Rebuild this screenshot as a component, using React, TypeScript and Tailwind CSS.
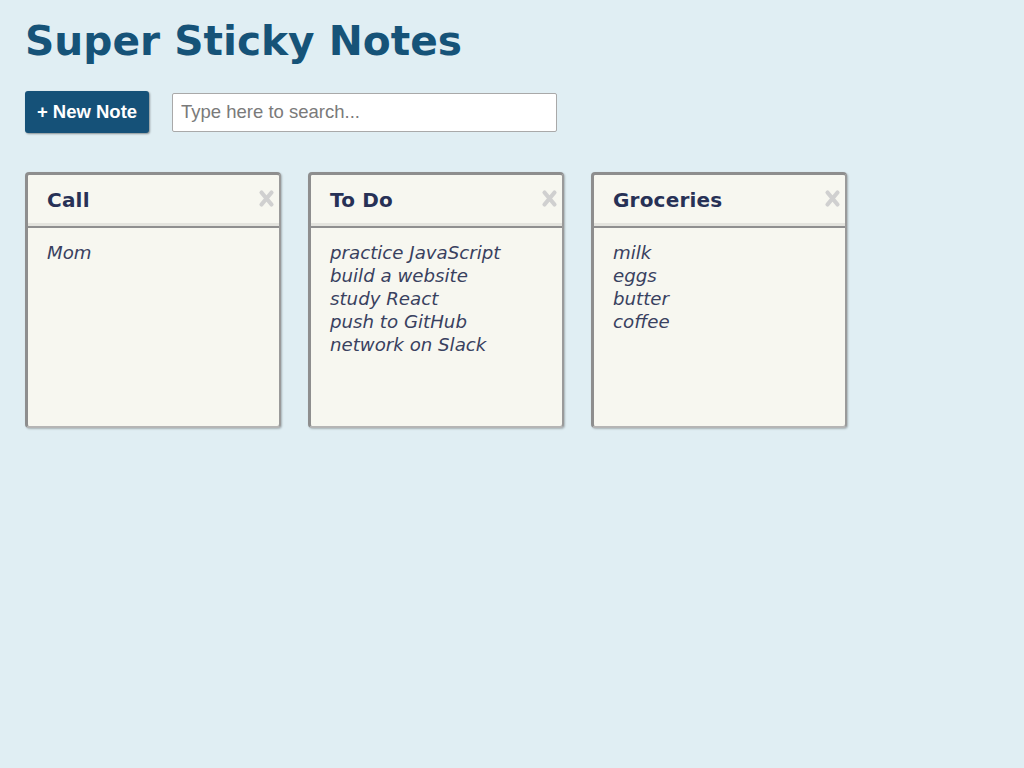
import React from "react";

const notes = [
  { title: "Call", items: ["Mom"] },
  {
    title: "To Do",
    items: [
      "practice JavaScript",
      "build a website",
      "study React",
      "push to GitHub",
      "network on Slack",
    ],
  },
  { title: "Groceries", items: ["milk", "eggs", "butter", "coffee"] },
];

function Note({ title, items }: { title: string; items: string[] }) {
  return (
    <div className="relative w-[256px] h-[256px] rounded-[4px] bg-[#f7f7f0] border-t-[3px] border-l-[3px] border-r-2 border-b-2 border-t-[#8e8e8e] border-l-[#8e8e8e] border-r-[#9a9a9a] border-b-[#b5b5b5] shadow-[1px_1px_2px_rgba(0,0,0,0.25)] flex flex-col">
      <div className="h-[51px] shrink-0 flex items-center pl-[19px] pt-[2px] border-b-[3px] border-b-[#e4e4de]">
        <span className="text-[20px] font-bold text-[#273156] tracking-[0.2px]">
          {title}
        </span>
      </div>
      <div className="h-[2px] bg-[#8f8f8f] shrink-0" />
      <svg
        className="absolute right-[4px] top-[14px]"
        width="17"
        height="19"
        viewBox="0 0 17 19"
      >
        <path
          d="M3.5 3.5 L13.5 15.5 M13.5 3.5 L3.5 15.5"
          stroke="#d0d0d0"
          strokeWidth="4.2"
          strokeLinecap="round"
          fill="none"
        />
      </svg>
      <div className="pl-[19px] pt-[13px] text-[18.2px] leading-[23px] italic text-[#39415f]">
        {items.map((it) => (
          <div key={it}>{it}</div>
        ))}
      </div>
    </div>
  );
}

export default function App() {
  return (
    <div className="min-h-[768px] w-full bg-[#e0eef3] font-['DejaVu_Sans',sans-serif] px-[25px] pt-[17px]">
      <h1 className="text-[40.7px] leading-[48px] font-bold text-[#165378]">
        Super Sticky Notes
      </h1>
      <div className="mt-[26px] flex items-center gap-[23px]">
        <button className="w-[124px] h-[42px] rounded-[3px] bg-[#155178] text-white font-bold text-[18.5px] font-['Liberation_Sans',sans-serif] shadow-[1px_1px_2px_rgba(0,0,0,0.4)]">
          + New Note
        </button>
        <input
          className="w-[385px] h-[39px] bg-white border border-[#a9a9a9] rounded-[2px] px-[8px] text-[18.5px] font-['Liberation_Sans',sans-serif] placeholder:text-[#7a7a7a] outline-none"
          placeholder="Type here to search..."
        />
      </div>
      <div className="mt-[39px] flex gap-[27px]">
        {notes.map((n) => (
          <Note key={n.title} title={n.title} items={n.items} />
        ))}
      </div>
    </div>
  );
}
